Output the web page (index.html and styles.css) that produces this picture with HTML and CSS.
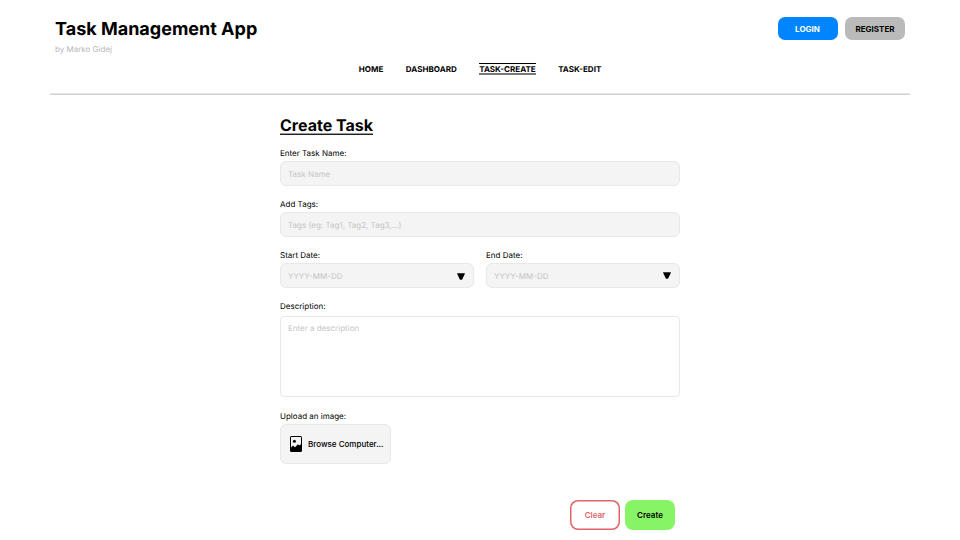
FILE: index.html
```html
<!DOCTYPE html>
<html lang="en">
<head>
<meta charset="utf-8">
<title>Task Management App</title>
<link rel="stylesheet" href="styles.css">
</head>
<body>
<header class="header">
  <div class="topbar">
    <div class="brand">
      <h1 class="brand-title">Task Management App</h1>
      <p class="brand-author">by Marko Gidej</p>
    </div>
    <div class="auth">
      <button class="auth-btn login" type="button">LOGIN</button>
      <button class="auth-btn register" type="button">REGISTER</button>
    </div>
  </div>
  <nav class="nav">
    <a class="nav-link">HOME</a>
    <a class="nav-link">DASHBOARD</a>
    <a class="nav-link active">TASK-CREATE</a>
    <a class="nav-link">TASK-EDIT</a>
  </nav>
</header>
<main class="form">
  <h2 class="form-title">Create Task</h2>
  <div class="field">
    <div class="label">Enter Task Name:</div>
    <div class="input"><span>Task Name</span></div>
  </div>
  <div class="field">
    <div class="label">Add Tags:</div>
    <div class="input"><span>Tags (eg: Tag1, Tag2, Tag3,...)</span></div>
  </div>
  <div class="dates">
    <div class="field">
      <div class="label">Start Date:</div>
      <div class="input"><span>YYYY-MM-DD</span><svg class="arrow low" viewBox="0 0 8 7"><path d="M0 0.2H8L7.2 2.2L5 6.8H3L0.8 2.2Z"/></svg></div>
    </div>
    <div class="field">
      <div class="label">End Date:</div>
      <div class="input"><span>YYYY-MM-DD</span><svg class="arrow" viewBox="0 0 8 7"><path d="M0 0.2H8L7.2 2.2L5 6.8H3L0.8 2.2Z"/></svg></div>
    </div>
  </div>
  <div class="field description">
    <div class="label">Description:</div>
    <div class="textarea">Enter a description</div>
  </div>
  <div class="field">
    <div class="label">Upload an image:</div>
    <button class="browse" type="button">
      <svg class="picture" viewBox="0 0 12 16"><path fill-rule="evenodd" d="M1.5 0H10.5Q12 0 12 1.5V14.5Q12 16 10.5 16H1.5Q0 16 0 14.5V1.5Q0 0 1.5 0ZM1 1V11.5L3 9.6L5 11.3L8 8.3L9.2 9.5L11 8.3V1Z"/><circle cx="4.4" cy="5.3" r="1.5"/></svg>
      <span>Browse Computer...</span>
    </button>
  </div>
  <div class="actions">
    <button class="action clear" type="button">Clear</button>
    <button class="action create" type="button">Create</button>
  </div>
</main>
</body>
</html>
```
FILE: styles.css
```css
* { box-sizing: border-box; }
body {
  margin: 0;
  height: 540px;
  overflow: hidden;
  background: #fff;
  color: #000;
  font: 8px/10px Inter, "Liberation Sans", sans-serif;
  text-rendering: geometricPrecision;
}
h1, h2, p { margin: 0; }
button {
  font: inherit;
  color: inherit;
  border: 0;
  padding: 0;
}
.header {
  width: 860px;
  height: 95px;
  margin: 0 auto;
  border-bottom: 1px solid #d2d2d2;
  box-shadow: inset 0 -1px 0 #e6e6e6;
}
.topbar {
  display: flex;
  justify-content: space-between;
  height: 63px;
  padding: 17px 5px 0;
}
.brand-title {
  height: 24px;
  font-size: 18px;
  line-height: 25px;
  font-weight: 700;
}
.brand-author {
  margin-top: 3px;
  color: #b8b8b8;
}
.auth {
  display: flex;
  gap: 7.5px;
}
.auth-btn {
  width: 60px;
  height: 23px;
  border-radius: 7px;
  font-weight: 700;
}
.login { background: #0085ff; color: #fff; }
.register { background: #bababa; }
.nav {
  display: flex;
  justify-content: center;
  gap: 22.5px;
  font-size: 8.05px;
  font-weight: 700;
}
.nav-link { height: 12px; line-height: 12px; }
.active {
  border-top: 1px solid #000;
  border-bottom: 2px solid #777;
  line-height: 10px;
}
.form {
  width: 400px;
  margin: 0 auto;
  padding-top: 20px;
}
.form-title {
  width: fit-content;
  height: 20px;
  margin-bottom: 13px;
  border-bottom: 1px solid #222;
  box-shadow: inset 0 -1px 0 #999;
  font-size: 16px;
  line-height: 20px;
  font-weight: 700;
}
.field { margin-bottom: 13px; }
.label { height: 13px; }
.input {
  display: flex;
  align-items: center;
  justify-content: space-between;
  height: 25px;
  padding: 0 8px 0 7px;
  border: 1px solid #e8e8e8;
  border-radius: 6px;
  background: #f4f4f4;
  color: #c5c5c5;
}
.arrow { width: 8px; height: 7px; }
.low { margin-top: 1px; }
.dates {
  display: grid;
  grid-template-columns: 1fr 1fr;
  gap: 12px;
}
.description { margin-bottom: 14px; }
.description .label { height: 15px; }
.textarea {
  height: 81px;
  padding: 6px 7px;
  border: 1px solid #e8e8e8;
  border-radius: 4px;
  color: #c5c5c5;
}
.browse {
  display: flex;
  align-items: center;
  gap: 6px;
  width: 111px;
  height: 40px;
  padding-left: 9px;
  border: 1px solid #e8e8e8;
  border-radius: 6px;
  background: #f4f4f4;
  font-weight: 500;
}
.picture { width: 12px; height: 16px; }
.actions {
  display: flex;
  justify-content: flex-end;
  gap: 5px;
  margin-top: 36px;
  padding-right: 5px;
}
.action {
  width: 50px;
  height: 30px;
  border-radius: 8px;
  font-weight: 600;
}
.clear {
  background: #fff;
  box-shadow: inset 0 0 0 1.5px #e06666;
  color: #e06666;
}
.create { background: #87f466; }
```
